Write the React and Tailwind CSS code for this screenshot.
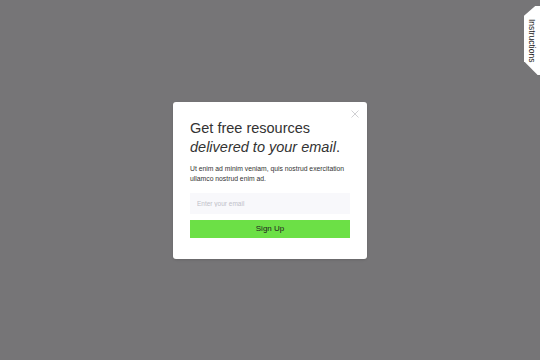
import React from "react";

const font = { fontFamily: '"Liberation Sans", Arial, sans-serif' };

const InstructionsTab = () => (
  <div className="absolute right-0 top-[6px] flex h-[69px] w-[16px] items-center justify-center bg-white [clip-path:polygon(70%_0,100%_0,100%_100%,85%_100%,0_80%,0_14%)]">
    <span className="whitespace-nowrap text-[8.5px] text-[#222] [writing-mode:vertical-rl]">
      Instructions
    </span>
  </div>
);

const CloseIcon = () => (
  <svg width="8" height="8" viewBox="0 0 8 8" className="text-[#c4c4c8]">
    <path d="M0.5 0.5L7.5 7.5M7.5 0.5L0.5 7.5" stroke="currentColor" strokeWidth="0.8" />
  </svg>
);

export default function App() {
  return (
    <div className="relative flex h-[360px] w-[540px] items-center justify-center overflow-hidden bg-[#767577]" style={font}>
      <InstructionsTab />
      <div className="relative w-[194px] rounded-[3px] bg-white px-[17px] pb-[21px] pt-[17px] shadow-sm">
        <button className="absolute right-[7px] top-[7px] p-[1px]">
          <CloseIcon />
        </button>
        <h2 className="text-[14.5px] leading-[19px] text-[#333]">
          Get free resources
          <br />
          <em>delivered to your email</em>.
        </h2>
        <p className="mt-[7px] text-[6.8px] leading-[10px] text-[#333]">
          Ut enim ad minim veniam, quis nostrud exercitation ullamco nostrud enim ad.
        </p>
        <input
          type="email"
          placeholder="Enter your email"
          className="mt-[9px] block h-[21px] w-full bg-[#f8f8fb] px-[7px] text-[6.5px] text-[#333] outline-none placeholder:text-[#c0c0c8]"
        />
        <button className="mt-[6px] block h-[18px] w-full bg-[#6ce046] text-[8px] text-[#222]">
          Sign Up
        </button>
      </div>
    </div>
  );
}
